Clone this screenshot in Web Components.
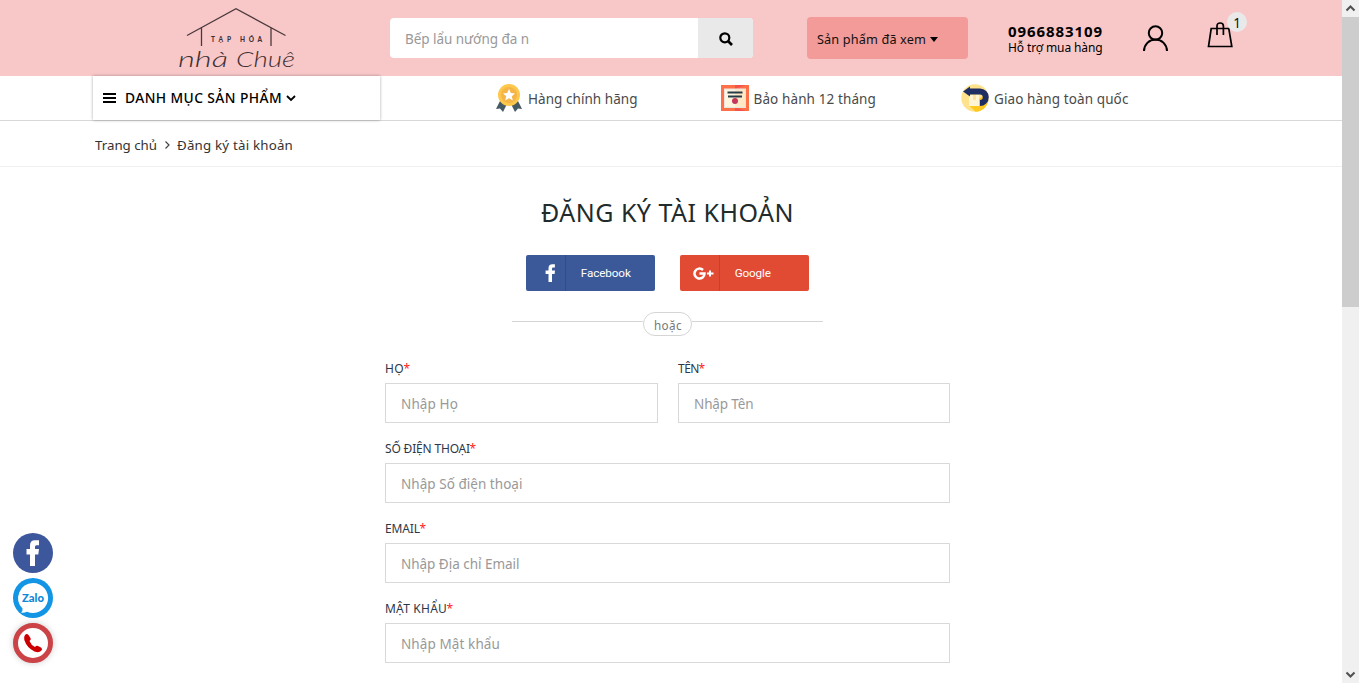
<!DOCTYPE html>
<html lang="vi"><head><meta charset="utf-8"><title>Đăng ký tài khoản</title>
<style>html,body{margin:0;height:100%;overflow:hidden;background:#fff;font-family:"Noto Sans","Open Sans",sans-serif}</style></head>
<body><register-page></register-page>
<script>
const define=(name,html,ready)=>customElements.define(name,class extends HTMLElement{
  connectedCallback(){
    if(this.shadowRoot)return;
    const t=document.createElement('template');
    t.innerHTML='<style>*{box-sizing:border-box}svg{display:block;flex:none}</style>'+html;
    this.attachShadow({mode:'open'}).append(t.content.cloneNode(true));
    if(ready)ready(this,this.shadowRoot);
  }
});
// A single line whose tracking is set so that it fills the width in its "w" attribute.
define('tracked-text','<style>:host{display:block;white-space:nowrap;flex:none}span{display:inline-block}</style><span><slot></slot></span>',(el,r)=>{
  const s=r.querySelector('span'),w=+el.getAttribute('w');
  const n=[...el.textContent.normalize('NFC')].length;
  el.style.width=w+'px';
  s.style.letterSpacing=((w-s.getBoundingClientRect().width)/n).toFixed(3)+'px';
});
define('shop-logo',`<style>:host{display:block;width:120px;height:64px}</style>
<svg width="120" height="64" viewBox="176 7 120 64" fill="none" stroke="#4a393c" stroke-width="1.3">
<path d="M187 35.5 236 8.8 285.5 35.5M201.5 27.5V46M271 27.5V46"/>
<g fill="#3e3134" stroke="none"><text x="211" y="41.500" font-family="Lato" font-weight="900" font-size="6.500" textLength="20">TẠP</text><text x="240" y="41.500" font-family="Lato" font-weight="900" font-size="6.500" textLength="22">HÓA</text>
<text x="178" y="67" font-family="Lato" font-weight="300" font-style="italic" font-size="22" textLength="50" lengthAdjust="spacingAndGlyphs">nhà</text><text x="236" y="67" font-family="Lato" font-weight="300" font-style="italic" font-size="22" textLength="59" lengthAdjust="spacingAndGlyphs">Chuê</text></g></svg>`);
define('search-box',`<style>:host{display:flex;width:363px;height:40px;border-radius:4px;overflow:hidden;background:#fff;color:#999;font-size:13.5px;line-height:42px}
.q{flex:1;padding-left:15px}.b{width:55px;background:#e9e9e9;display:grid;place-items:center}svg{margin-top:2px}</style>
<div class="q"><tracked-text w="124">Bếp lẩu nướng đa n</tracked-text></div><div class="b"><svg width="14" height="14" viewBox="0 0 14 14" fill="none" stroke="#000"><circle cx="5.8" cy="5.8" r="4.5" stroke-width="2.2"/><path d="m9 9 4 4" stroke-width="2.6"/></svg></div>`);
define('viewed-button',`<style>:host{display:flex;align-items:center;width:161px;height:42px;border-radius:4px;background:#f29b99;padding:1px 0 0 10px;gap:4px;font-size:12.7px;color:#111}svg{margin-top:2px}</style>
<tracked-text w="109">Sản phẩm đã xem</tracked-text><svg width="8" height="5"><path d="M0 0h8L4 5z"/></svg>`);
define('support-phone',`<style>:host{display:block;color:#000}b{display:block;font-size:15px;line-height:18px}div{font-size:12px;line-height:15px}</style>
<b><tracked-text w="95">0966883109</tracked-text></b><div><tracked-text w="94.5">Hỗ trợ mua hàng</tracked-text></div>`);
define('user-icon',`<style>:host{display:block}</style><svg width="27" height="27" viewBox="0 0 27 27" fill="none" stroke="#000" stroke-width="2"><circle cx="13.5" cy="8" r="6.7"/><path d="M2 26a11.5 11.5 0 0 1 23 0"/></svg>`);
define('cart-button',`<style>:host{display:block;position:relative;width:27px;height:26px}i{position:absolute;left:20px;top:-10px;width:20px;height:20px;border-radius:50%;background:#e9e9e9;font:13.500px/22px "Noto Sans";text-align:center;color:#111}</style>
<svg width="27" height="26" viewBox="0 0 27 26" fill="none" stroke="#000" stroke-width="1.7"><path d="M4.2 6.500h17.600l3 18H1.500z"/><path d="M10 13V4q0-3 3.200-3t3.200 3v9"/></svg><i>1</i>`);
define('shop-header',`<style>:host{display:flex;height:76px;background:#f8c7c8;padding-left:176px;align-items:flex-start}
shop-logo{margin-top:7px}search-box{margin:18px 0 0 94px}viewed-button{margin:17px 0 0 54px}support-phone{margin:22px 0 0 40px}user-icon{margin:25px 0 0 38.500px}cart-button{margin:22px 0 0 38.500px}</style>
<shop-logo></shop-logo><search-box></search-box><viewed-button></viewed-button><support-phone></support-phone><user-icon></user-icon><cart-button></cart-button>`);
define('category-menu',`<style>:host{display:flex;align-items:center;width:287px;height:44px;box-shadow:0 0 3px #0005;padding-left:10px;font-size:13.800px;font-weight:500;color:#000}tracked-text{margin:-2px 4px 0 9px}</style>
<svg width="13" height="10"><path d="M0 0h13v2H0zM0 4h13v2H0zM0 8h13v2H0z"/></svg><tracked-text w="157">DANH MỤC SẢN PHẨM</tracked-text><svg width="10" height="7" fill="none" stroke="#000" stroke-width="1.8"><path d="m1 1 4 4 4-4"/></svg>`);
define('service-note',`<style>:host{display:flex;align-items:center;gap:5px;font-size:13.500px;color:#4a4a4a}div{padding-top:1px}</style><slot name="icon"></slot><div><slot></slot></div>`);
define('medal-icon',`<style>:host{display:block}</style><svg width="26" height="28" viewBox="0 0 26 28"><path fill="#455a64" d="m4 17-4 8 4-.5L7 28l4-8zM22 17l4 8-4-.5-3 3.5-4-8z"/><circle cx="13" cy="11" r="11" fill="#fdc84b"/><circle cx="13" cy="11" r="8" fill="#f5b547"/><path fill="#fff" d="m13 5 1.800 4 4.200.4-3.200 2.900 1 4.200-3.800-2.200-3.800 2.200 1-4.200L7 9.400l4.200-.4z"/></svg>`);
define('warranty-icon',`<style>:host{display:block}</style><svg width="28" height="26" viewBox="0 0 28 26"><path fill="#ff7048" d="M0 0h28v26H0z"/><path fill="#f4534c" d="M14 0h11L14 4zM14 26h11l-11-4z"/><path fill="#e8e4e0" d="M3 3.500h22V23H3z"/><path fill="#fff5df" d="M4 4.500h10V22H4z"/><path fill="#ffe8c5" d="M14 4.500h10V22H14z"/><path stroke="#263c4a" stroke-width="1.800" d="M6.500 7.500h15M7 11.500h14"/><circle cx="14" cy="16" r="3" fill="#c4375a"/></svg>`);
define('return-icon',`<style>:host{display:block}</style><svg width="28" height="28" viewBox="0 0 28 28"><circle cx="14" cy="14" r="13.700" fill="#ffe28b"/><path d="M22 12 27.500 16c-1 7-7 12-13 11.700l-6-5.700z" fill="#ffc91f"/><path fill="#fff4d4" d="M8 11h10v11H8z"/><path fill="#ffe19b" d="M12 11h3v5h-3z"/><path d="M8 7.500h11a5.500 5.500 0 0 1 0 11.500" fill="none" stroke="#1e2d63" stroke-width="6"/><path fill="#1e2d63" d="m2 7.500 7-5v10z"/></svg>`);
define('service-bar',`<style>:host{display:flex;height:45px;border-bottom:1px solid #d8d8d8;padding-left:93px;background:#fff}service-note{height:44px}.a{margin-left:116px}.b{margin-left:84px}.c{margin-left:85px}</style>
<category-menu></category-menu><service-note class="a"><medal-icon slot="icon"></medal-icon><tracked-text style="margin-left:1px;margin-right:-1px" w="109.500">Hàng chính hãng</tracked-text></service-note>
<service-note class="b"><warranty-icon slot="icon"></warranty-icon><tracked-text w="122.500">Bảo hành 12 tháng</tracked-text></service-note>
<service-note class="c"><return-icon slot="icon"></return-icon><tracked-text w="134.500">Giao hàng toàn quốc</tracked-text></service-note>`);
define('bread-crumb',`<style>:host{display:flex;align-items:center;height:46px;border-bottom:1px solid #f0f0f0;padding:3px 0 0 95px;font-size:13.300px;color:#333}svg{margin:0 7px 0 8px}</style>
<tracked-text w="62">Trang chủ</tracked-text><svg width="5" height="8" fill="none" stroke="#444" stroke-width="1.200"><path d="m.5.5 3.500 3.500L.5 7.500"/></svg><tracked-text w="116">Đăng ký tài khoản</tracked-text>`);
define('social-button',`<style>:host{display:flex;width:128.500px;height:36px;border-radius:2px;color:#fff;background:var(--c);font:11.700px/36px Roboto,sans-serif}div{width:40px;display:flex;align-items:center;border-right:1px solid #0002;margin-right:14.500px}</style><div><slot name="icon"></slot></div><slot></slot>`);
define('facebook-glyph',`<style>:host{display:block;margin-left:19px}</style><svg width="11" height="18" viewBox="0 0 11 18"><path fill="#fff" d="M3.500 18V10H.6V6.500h2.900V4.300Q3.500.3 7.400.3h2.500v3.200H8.200Q7 3.500 7 4.700v1.800h3l-.4 3.500H7v8z"/></svg>`);
define('google-glyph',`<style>:host{display:block;margin-left:13px}</style><svg width="21" height="13" viewBox="0 0 21 13" fill="none" stroke="#fff" stroke-width="2.500"><path d="M10 3A5 5 0 1 0 11.500 6.500H6.500"/><path stroke-width="2" d="M17 3.500v6M14 6.500h6.500"/></svg>`);
define('or-divider',`<style>:host{display:flex;width:311px;height:24px;align-items:flex-start}i{flex:1;height:1px;background:#d5d5d5;margin-top:9px}div{width:49px;height:24px;border:1px solid #d5d5d5;border-radius:12px;padding-left:10px;font-size:11.700px;line-height:24px;color:#777}</style><i></i><div><tracked-text w="28">hoặc</tracked-text></div><i></i>`);
define('form-field',`<style>:host{display:block;min-width:0}.l{display:flex;font-size:12px;line-height:18px;height:23px;color:#2d3748}em{font-style:normal;color:#f22;margin-left:-.5px}.f{height:40px;border:1px solid #d9d9d9;padding-left:15px;font-size:13.500px;line-height:40px;color:#999}</style><div class="l"><slot name="label"></slot><em>*</em></div><div class="f"><slot></slot></div>`);
define('register-form',`<style>:host{display:flex;flex-direction:column;align-items:center;width:565px;margin-left:385px}
h1{margin:26px 0 0;font-weight:400;font-size:25px;line-height:38px;color:#212b2b}.s{display:flex;gap:25.500px;margin-top:24px}or-divider{margin-top:21px}.g{width:565px;display:grid;grid-template-columns:273px 272px;column-gap:20px;row-gap:17px;margin-top:24px}.w{grid-column:1/3}</style>
<h1><tracked-text w="253">ĐĂNG KÝ TÀI KHOẢN</tracked-text></h1>
<div class="s"><social-button style="--c:#3b5998"><facebook-glyph slot="icon"></facebook-glyph><tracked-text w="50">Facebook</tracked-text></social-button><social-button style="--c:#e14b34"><google-glyph slot="icon"></google-glyph><tracked-text w="36">Google</tracked-text></social-button></div>
<or-divider></or-divider>
<div class="g"><form-field><tracked-text slot="label" w="19">HỌ</tracked-text><tracked-text w="57">Nhập Họ</tracked-text></form-field>
<form-field><tracked-text slot="label" w="21">TÊN</tracked-text><tracked-text w="59.500">Nhập Tên</tracked-text></form-field>
<form-field class="w"><tracked-text slot="label" w="85">SỐ ĐIỆN THOẠI</tracked-text><tracked-text w="121.500">Nhập Số điện thoại</tracked-text></form-field>
<form-field class="w"><tracked-text slot="label" w="35">EMAIL</tracked-text><tracked-text w="118.500">Nhập Địa chỉ Email</tracked-text></form-field>
<form-field class="w"><tracked-text slot="label" w="62">MẬT KHẨU</tracked-text><tracked-text w="99">Nhập Mật khẩu</tracked-text></form-field></div>`);
define('contact-dock',`<style>:host{position:absolute;left:13px;top:533px;display:grid;gap:5px}svg{overflow:visible}.p{filter:drop-shadow(0 0 3px #0003)}</style>
<svg width="40" height="40"><circle cx="20" cy="20" r="20" fill="#3d579d"/><path fill="#fff" d="M17 33V21.500H13.500V16H17v-3.500Q17 7.300 22 7.300h4v5h-2.500q-1.500 0-1.500 1.500V16h4l-.7 5.500H22V33z"/></svg>
<svg width="40" height="40"><circle cx="20" cy="20" r="20" fill="#1295e5"/><path fill="#fff" d="M20 5a15 15 0 1 1-6 28.700Q11 35 8 34.500q2-1.500 1.500-4A15 15 0 0 1 20 5z"/><text x="9" y="24" font-family="Lato" font-weight="900" font-size="11.500" fill="#1185d6" textLength="22" lengthAdjust="spacingAndGlyphs">Zalo</text></svg>
<svg class="p" width="40" height="40"><circle cx="20" cy="20" r="17.500" fill="#fff" stroke="#cb4346" stroke-width="5"/><path fill="#c00" d="M12 12q2-2 3.500 0l2 3q1 1.500-1 3 1.500 4 5.500 6 1.500-2 3-1l3 1.500q2 1.500.5 3Q26 30.500 21.500 28.500 14 25 11.300 17 10.500 14 12 12z"/></svg>`);
define('scroll-track',`<style>:host{display:flex;flex-direction:column;width:17px;height:683px;background:#f0f0f0}div{height:290px;background:#cdcdcd}svg{fill:none;stroke:#505050;stroke-width:2}svg:last-child{margin-top:auto}</style><svg width="17" height="17"><path d="m4.500 10.500 4-4 4 4"/></svg><div></div><svg width="17" height="17"><path d="m4.500 6.500 4 4 4-4"/></svg>`);
define('register-page',`<style>:host{display:flex;width:1359px;height:683px;overflow:hidden;position:relative}main{width:1342px}</style><main><shop-header></shop-header><service-bar></service-bar><bread-crumb></bread-crumb><register-form></register-form></main><scroll-track></scroll-track><contact-dock></contact-dock>`);
</script></body></html>
